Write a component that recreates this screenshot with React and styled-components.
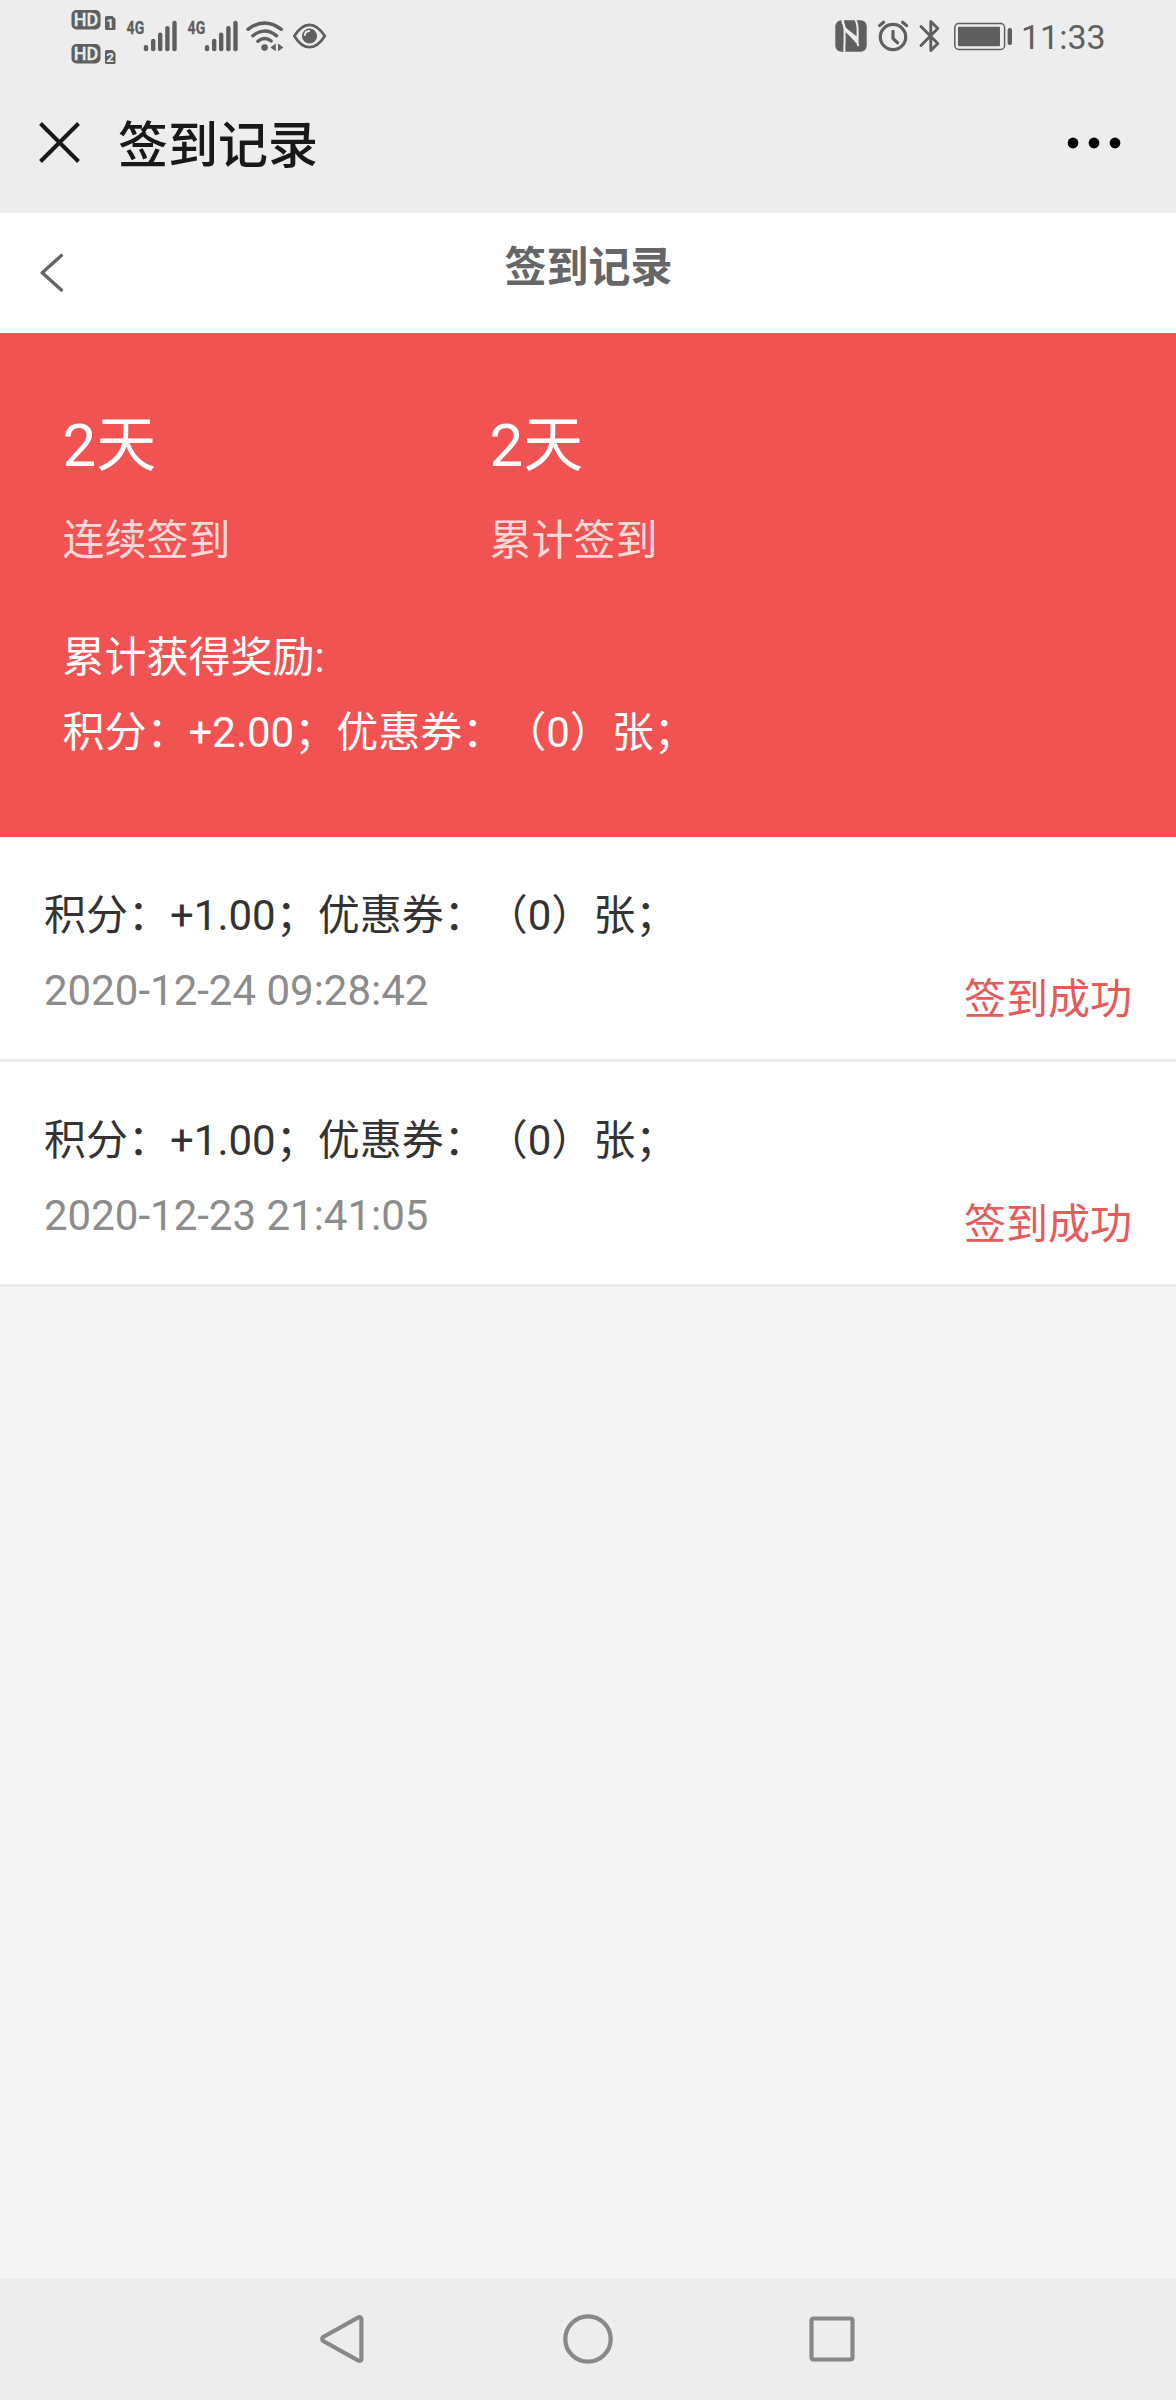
import React from 'react';
import styled, { createGlobalStyle } from 'styled-components';

const GlobalStyle = createGlobalStyle`
  body {
    margin: 0;
    background: #f5f5f5;
    font-family: Roboto, "Noto Sans CJK SC", sans-serif;
    text-spacing-trim: space-all;
  }
  svg { display: block; flex: none; }
`;

const Screen = styled.div`
  display: flex;
  flex-direction: column;
  width: 1176px;
  height: 2400px;
  background: #f5f5f5;
`;

const StatusBar = styled.div`
  display: flex;
  justify-content: space-between;
  height: 72px;
  padding: 0 70px 0 71px;
  background: #ededed;
  color: #5f5f5f;
`;

const IconGroup = styled.div`
  display: flex;
`;

const Clock = styled.span`
  width: 85px;
  margin-left: -1px;
  font-size: 34px;
  line-height: 74px;
  color: #606060;
  white-space: nowrap;
`;

const AppBar = styled.div`
  display: flex;
  align-items: center;
  height: 141px;
  box-sizing: border-box;
  padding: 0 55px 0 38px;
  background: #ededed;
  color: #181818;
`;

const AppTitle = styled.h1`
  flex: 1;
  margin: 0 0 0 36px;
  padding-top: 7px;
  font-size: 50px;
  font-weight: 500;
  line-height: 134px;
`;

const PageBar = styled.div`
  display: grid;
  grid-template-columns: 84px 1fr 84px;
  height: 120px;
  background: #fff;
  color: #666;
`;

const BackButton = styled.div`
  padding: 40px 0 0 40px;
`;

const PageTitle = styled.h2`
  margin: 0 0 0 1px;
  font-size: 42px;
  font-weight: 700;
  line-height: 110px;
  text-align: center;
`;

const Summary = styled.section`
  height: 504px;
  box-sizing: border-box;
  padding: 67px 62.5px 0;
  background: #f15353;
  color: #fff;
`;

const Stats = styled.div`
  display: grid;
  grid-template-columns: 427px 1fr;
`;

const StatValue = styled.div`
  font-size: 60px;
  line-height: 92px;
`;

const StatLabel = styled.div`
  margin-top: 18px;
  font-size: 42px;
  line-height: 62px;
  color: rgba(255, 255, 255, 0.78);
`;

const Reward = styled.div`
  margin-top: 48px;
  font-size: 42px;
  line-height: 75px;
`;

const Record = styled.div`
  display: flex;
  justify-content: space-between;
  height: 225px;
  box-sizing: border-box;
  padding: 41px 44px 0;
  border-bottom: 3px solid #eaeaea;
  background: #fff;
  font-size: 42px;
  line-height: 75px;
`;

const RecordTitle = styled.div`
  color: #333;
`;

const RecordTime = styled.div`
  color: #8c8c8c;
`;

const RecordStatus = styled.div`
  padding-top: 84px;
  color: #e65a5a;
`;

const NavBar = styled.div`
  display: flex;
  justify-content: center;
  align-items: center;
  gap: 194px;
  height: 122px;
  margin-top: auto;
  background: #ededed;
`;

const INK = '#5f5f5f';

const HdBadge = () => (
  <svg width="49" height="72" viewBox="71 0 49 72">
    {[10, 44].map((y, i) => (
      <g key={y}>
        <rect x="71.5" y={y} width="29" height="19.5" rx="5" fill={INK} />
        <text x="73.8" y={y + 16.4} fontSize="19" fontFamily="Roboto" fontWeight="500" fill="#ededed" stroke="#ededed" strokeWidth="0.3" textLength="24.5" lengthAdjust="spacingAndGlyphs">HD</text>
        <path d={`M106.5 ${y + 6}h6l3 3v9.5a1.5 1.5 0 0 1 -1.5 1.5h-7.5a1.5 1.5 0 0 1 -1.5 -1.5v-11a1.5 1.5 0 0 1 1.5 -1.5z`} fill={INK} />
        <text x="110.2" y={y + 18} fontSize="13.5" fontFamily="Roboto" fontWeight="700" textAnchor="middle" fill="#ededed">{i + 1}</text>
      </g>
    ))}
  </svg>
);

const Signal = () => (
  <svg width="61" height="72" viewBox="120 0 61 72">
    <text x="126.6" y="34.2" fontSize="19" fontFamily="Roboto" fontWeight="700" fill={INK} stroke={INK} strokeWidth="0.3" textLength="17.6" lengthAdjust="spacingAndGlyphs">4G</text>
    {[[143.8, 45], [151, 38.8], [158, 32.6], [165.2, 26], [172.3, 20.8]].map(([x, y]) => (
      <rect key={x} x={x} y={y} width="4.4" height={51.3 - y} rx="2.1" fill={INK} />
    ))}
  </svg>
);

const Wifi = () => (
  <svg width="46" height="72" viewBox="242 0 46 72" fill="none" stroke={INK} strokeWidth="3.4" strokeLinecap="round">
    <path d="M248 29.3Q264.7 16.5 281.4 29.3" />
    <path d="M252.8 35.8Q264.7 26.3 276.6 35.8" />
    <path d="M257.8 41.3Q264.7 35.8 271.2 41" />
    <circle cx="264.6" cy="47.6" r="3.3" fill={INK} stroke="none" />
    <path d="M275.8 43.5v7.8l-5.4 -3.9zM278 43.5v7.8l5.4 -3.9z" fill={INK} stroke="none" />
  </svg>
);

const Eye = () => (
  <svg width="42" height="72" viewBox="288 0 42 72" fill="none" stroke={INK} strokeWidth="2.8">
    <path d="M294.3 36C298 30 303 24.8 309.5 24.8S321 30 324.8 36C321 42 316 47.2 309.5 47.2S298 42 294.3 36z" strokeLinejoin="round" />
    <circle cx="309.5" cy="36" r="7.6" fill={INK} stroke="none" />
    <path d="M304.8 35.2a4.6 4.6 0 0 1 4.4 -4.2" stroke="#ededed" strokeWidth="1.8" strokeLinecap="round" />
  </svg>
);

const Nfc = () => (
  <svg width="36" height="72" viewBox="835 0 36 72">
    <rect x="835.3" y="20.3" width="31.4" height="31.4" rx="6" fill={INK} />
    <g fill="none" stroke="#ededed" strokeWidth="2">
      <path d="M842.8 20V24M844.6 28V42C844.6 46 843.8 49 844.6 52" />
      <path d="M855.4 20C857.4 23 857.6 26 857.6 30V44L858.6 46" />
      <path d="M842.6 20.5L844.6 28L857 42.500" strokeWidth="2.400" />
    </g>
    <path d="M844.600 27L857 36.500V43L844.600 31z" fill="#ededed" />
  </svg>
);

const Alarm = () => (
  <svg width="46" height="72" viewBox="871 0 46 72" fill="none" stroke={INK} strokeWidth="3.2" strokeLinecap="round" strokeLinejoin="round">
    <circle cx="893" cy="37" r="12.7" />
    <path d="M893 31.3v7.2l4.6 4.2M879.6 25.6l4 -3.4M906.6 25.6l-4 -3.4" />
  </svg>
);

const Bluetooth = () => (
  <svg width="30" height="72" viewBox="917 0 30 72" fill="none" stroke={INK} strokeWidth="2.9" strokeLinecap="round" strokeLinejoin="round">
    <path d="M921 26.5L937.8 43.5L930.8 50.5V21.5L937.8 28.5L921 45.5" />
  </svg>
);

const Battery = () => (
  <svg width="75" height="72" viewBox="947 0 75 72">
    <rect x="954.8" y="23.6" width="49.8" height="25.8" rx="4" fill="none" stroke={INK} strokeWidth="1.5" />
    <rect x="958" y="26.8" width="42" height="19.4" rx="1" fill={INK} />
    <rect x="1007.6" y="28" width="4.4" height="17" rx="2" fill={INK} />
  </svg>
);

const CloseIcon = () => (
  <svg width="44" height="44" viewBox="0 0 44 44" stroke="#181818" strokeWidth="4">
    <path d="M2.5 2.5l38 38M40.5 2.5l-38 38" />
  </svg>
);

const MoreIcon = () => (
  <svg width="54" height="12" viewBox="0 0 54 12">
    {[6, 27, 48].map((cx) => <circle key={cx} cx={cx} cy="6" r="5.4" />)}
  </svg>
);

const ChevronIcon = () => (
  <svg width="24" height="40" viewBox="0 0 24 40" fill="none" stroke="#666" strokeWidth="3.4" strokeLinecap="round" strokeLinejoin="round">
    <path d="M21.4 2.6L2.2 19.8L21.4 37" />
  </svg>
);

const NavIcon = ({ children }) => (
  <svg width="50" height="50" viewBox="0 0 50 50" fill="none" stroke="#888" strokeWidth="4.2" strokeLinejoin="round">{children}</svg>
);

const stats = [
  { value: '2天', label: '连续签到' },
  { value: '2天', label: '累计签到' },
];

const records = [
  { time: '2020-12-24 09:28:42' },
  { time: '2020-12-23 21:41:05' },
];

export default function App() {
  return (
    <Screen>
      <GlobalStyle />
      <StatusBar>
        <IconGroup>
          <HdBadge />
          <Signal />
          <Signal />
          <Wifi />
          <Eye />
        </IconGroup>
        <IconGroup>
          <Nfc />
          <Alarm />
          <Bluetooth />
          <Battery />
          <Clock>11:33</Clock>
        </IconGroup>
      </StatusBar>
      <AppBar>
        <CloseIcon />
        <AppTitle>签到记录</AppTitle>
        <MoreIcon />
      </AppBar>
      <PageBar>
        <BackButton><ChevronIcon /></BackButton>
        <PageTitle>签到记录</PageTitle>
      </PageBar>
      <Summary>
        <Stats>
          {stats.map((s) => (
            <div key={s.label}>
              <StatValue>{s.value}</StatValue>
              <StatLabel>{s.label}</StatLabel>
            </div>
          ))}
        </Stats>
        <Reward>
          <div>累计获得奖励:</div>
          <div>积分：+2.00；优惠券：（0）张；</div>
        </Reward>
      </Summary>
      {records.map((r) => (
        <Record key={r.time}>
          <div>
            <RecordTitle>积分：+1.00；优惠券：（0）张；</RecordTitle>
            <RecordTime>{r.time}</RecordTime>
          </div>
          <RecordStatus>签到成功</RecordStatus>
        </Record>
      ))}
      <NavBar>
        <NavIcon><path d="M3.2 25a2.6 2.6 0 0 1 1 -2L39.4 3.4q2.5 -1 3 1.5v40.2q-.5 2.5 -3 1.5L4.2 27a2.6 2.6 0 0 1 -1 -2z" /></NavIcon>
        <NavIcon><circle cx="25" cy="25" r="22.7" /></NavIcon>
        <NavIcon><rect x="4.5" y="4.5" width="41" height="41" rx="2" /></NavIcon>
      </NavBar>
    </Screen>
  );
}
